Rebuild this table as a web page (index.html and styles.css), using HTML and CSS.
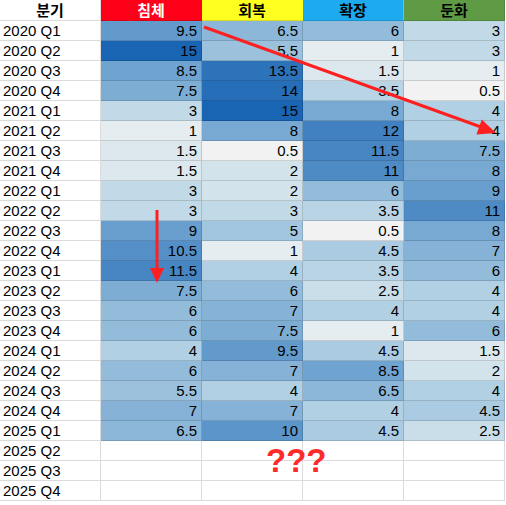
FILE: index.html
```html
<!DOCTYPE html>
<html>
	<head>
		<meta charset="utf-8">
		<title>분기별 국면</title>
		<link rel="stylesheet" href="styles.css">
	</head>
	<body>
		<div class="sheet">
			<div class="cell head">분기</div>
			<div class="cell head red">침체</div>
			<div class="cell head yellow">회복</div>
			<div class="cell head blue">확장</div>
			<div class="cell head green">둔화</div>

			<div class="cell label">2020 Q1</div><div class="cell num">9.5</div><div class="cell num">6.5</div><div class="cell num">6</div><div class="cell num">3</div>
			<div class="cell label">2020 Q2</div><div class="cell num">15</div><div class="cell num">5.5</div><div class="cell num">1</div><div class="cell num">3</div>
			<div class="cell label">2020 Q3</div><div class="cell num">8.5</div><div class="cell num">13.5</div><div class="cell num">1.5</div><div class="cell num">1</div>
			<div class="cell label">2020 Q4</div><div class="cell num">7.5</div><div class="cell num">14</div><div class="cell num">3.5</div><div class="cell num">0.5</div>
			<div class="cell label">2021 Q1</div><div class="cell num">3</div><div class="cell num">15</div><div class="cell num">8</div><div class="cell num">4</div>
			<div class="cell label">2021 Q2</div><div class="cell num">1</div><div class="cell num">8</div><div class="cell num">12</div><div class="cell num">4</div>
			<div class="cell label">2021 Q3</div><div class="cell num">1.5</div><div class="cell num">0.5</div><div class="cell num">11.5</div><div class="cell num">7.5</div>
			<div class="cell label">2021 Q4</div><div class="cell num">1.5</div><div class="cell num">2</div><div class="cell num">11</div><div class="cell num">8</div>
			<div class="cell label">2022 Q1</div><div class="cell num">3</div><div class="cell num">2</div><div class="cell num">6</div><div class="cell num">9</div>
			<div class="cell label">2022 Q2</div><div class="cell num">3</div><div class="cell num">3</div><div class="cell num">3.5</div><div class="cell num">11</div>
			<div class="cell label">2022 Q3</div><div class="cell num">9</div><div class="cell num">5</div><div class="cell num">0.5</div><div class="cell num">8</div>
			<div class="cell label">2022 Q4</div><div class="cell num">10.5</div><div class="cell num">1</div><div class="cell num">4.5</div><div class="cell num">7</div>
			<div class="cell label">2023 Q1</div><div class="cell num">11.5</div><div class="cell num">4</div><div class="cell num">3.5</div><div class="cell num">6</div>
			<div class="cell label">2023 Q2</div><div class="cell num">7.5</div><div class="cell num">6</div><div class="cell num">2.5</div><div class="cell num">4</div>
			<div class="cell label">2023 Q3</div><div class="cell num">6</div><div class="cell num">7</div><div class="cell num">4</div><div class="cell num">4</div>
			<div class="cell label">2023 Q4</div><div class="cell num">6</div><div class="cell num">7.5</div><div class="cell num">1</div><div class="cell num">6</div>
			<div class="cell label">2024 Q1</div><div class="cell num">4</div><div class="cell num">9.5</div><div class="cell num">4.5</div><div class="cell num">1.5</div>
			<div class="cell label">2024 Q2</div><div class="cell num">6</div><div class="cell num">7</div><div class="cell num">8.5</div><div class="cell num">2</div>
			<div class="cell label">2024 Q3</div><div class="cell num">5.5</div><div class="cell num">4</div><div class="cell num">6.5</div><div class="cell num">4</div>
			<div class="cell label">2024 Q4</div><div class="cell num">7</div><div class="cell num">7</div><div class="cell num">4</div><div class="cell num">4.5</div>
			<div class="cell label">2025 Q1</div><div class="cell num">6.5</div><div class="cell num">10</div><div class="cell num">4.5</div><div class="cell num">2.5</div>
			<div class="cell label">2025 Q2</div><div class="cell num"></div><div class="cell num"></div><div class="cell num"></div><div class="cell num"></div>
			<div class="cell label">2025 Q3</div><div class="cell num"></div><div class="cell num"></div><div class="cell num"></div><div class="cell num"></div>
			<div class="cell label">2025 Q4</div><div class="cell num"></div><div class="cell num"></div><div class="cell num"></div><div class="cell num"></div>
		</div>

		<svg class="marks" width="506" height="505" viewBox="0 0 506 505">
			<line x1="204" y1="27" x2="481" y2="127" stroke="#fe2020" stroke-width="3"/>
			<polygon points="496,133 476.4,134.4 481.8,119.4" fill="#fe2020"/>
			<line x1="157" y1="210" x2="157" y2="270" stroke="#fe2020" stroke-width="3"/>
			<polygon points="150,268 164,268 157,283" fill="#fe2020"/>
		</svg>
		<div class="ask">???</div>

		<script>
			// color scale: 0.5 -> light grey, 15 -> deep blue
			var cells = document.querySelectorAll('.num');
			for (var i = 0; i < cells.length; i++) {
				var txt = cells[i].textContent;
				if (!txt) continue;
				var t = (parseFloat(txt) - 0.5) / 14.5;
				var r = Math.round(242 - 216 * Math.pow(t, 0.85));
				var g = Math.round(242 - 142 * t);
				var b = Math.round(242 - 62 * t);
				cells[i].style.background = 'rgb(' + r + ',' + g + ',' + b + ')';
			}
		</script>
	</body>
</html>
```

FILE: styles.css
```css
body{
	margin: 0;
	background: #fff;
	color: #000;
	font-family: "Liberation Sans", Arial, "Noto Sans CJK KR", sans-serif;
	position: relative;
}
.sheet{
	display: grid;
	grid-template-columns: repeat(5, 101px);
	grid-template-rows: 21px;
	grid-auto-rows: 20px;
}
.cell{
	box-sizing: border-box;
	border-right: 1px solid rgba(0,0,0,.14);
	border-bottom: 1px solid rgba(0,0,0,.14);
	font-size: 15px;
	line-height: 19px;
	white-space: nowrap;
	overflow: hidden;
}
.head{
	font-family: "Noto Sans CJK KR", sans-serif;
	font-weight: bold;
	font-size: 15px;
	line-height: 20px;
	text-align: center;
}
.red{
	background: #fe0018;
	color: #fff;
	border-right-color: #fe0018;
}
.yellow{
	background: #ffff20;
	border-right-color: #ffff20;
}
.blue{
	background: #1eaaee;
	border-right-color: rgba(255,255,255,.3);
}
.green{
	background: #5f9b45;
}
.label{
	padding-left: 3px;
}
.num{
	text-align: right;
	padding-right: 4px;
}
.marks{
	position: absolute;
	left: 0;
	top: 0;
	pointer-events: none;
}
.ask{
	position: absolute;
	left: 266px;
	top: 444px;
	font-size: 33px;
	line-height: 33px;
	font-weight: bold;
	color: #ff2a2a;
}
```
